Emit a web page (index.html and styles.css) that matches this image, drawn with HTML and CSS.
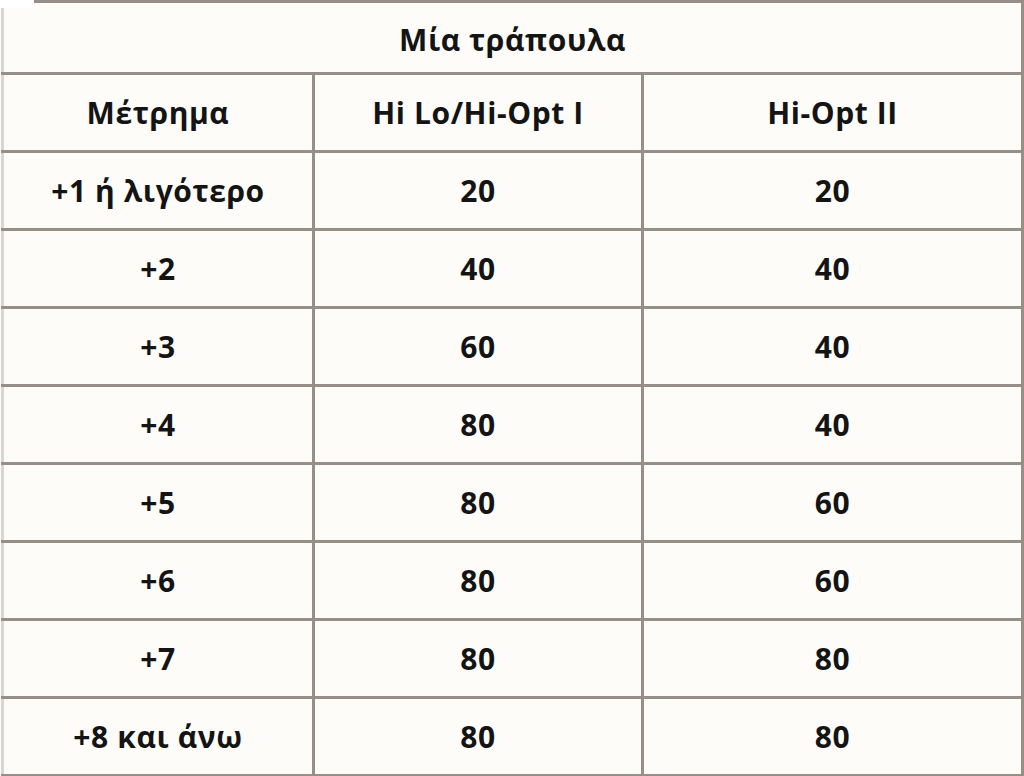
FILE: index.html
```html
<!DOCTYPE html>
<html lang="el">
<head>
<meta charset="utf-8">
<title>Μία τράπουλα</title>
<link rel="stylesheet" href="styles.css">
</head>
<body>
<div class="sheet">
<span class="notch"></span>
<table class="deck">
  <colgroup>
    <col class="c1"><col class="c2"><col class="c3">
  </colgroup>
  <tr class="title-row"><th colspan="3">Μία τράπουλα</th></tr>
  <tr><th>Μέτρημα</th><th>Hi Lo/Hi-Opt I</th><th>Hi-Opt II</th></tr>
  <tr><td>+1 ή λιγότερο</td><td>20</td><td>20</td></tr>
  <tr><td>+2</td><td>40</td><td>40</td></tr>
  <tr><td>+3</td><td>60</td><td>40</td></tr>
  <tr><td>+4</td><td>80</td><td>40</td></tr>
  <tr><td>+5</td><td>80</td><td>60</td></tr>
  <tr><td>+6</td><td>80</td><td>60</td></tr>
  <tr><td>+7</td><td>80</td><td>80</td></tr>
  <tr><td>+8 και άνω</td><td>80</td><td>80</td></tr>
</table>
</div>
</body>
</html>
```
FILE: styles.css
```css
html, body {
  margin: 0;
  padding: 0;
  background: #fdfcf9;
}
body {
  width: 1024px;
  height: 776px;
  overflow: hidden;
  font-family: "Open Sans", "DejaVu Sans", sans-serif;
  color: #141414;
}
.sheet {
  position: relative;
}
.notch {
  position: absolute;
  left: 0;
  top: 0;
  width: 34px;
  height: 8px;
  background: #ffffff;
}
.deck {
  margin-left: 1px;
  border-collapse: collapse;
  table-layout: fixed;
  width: 1020px;
}
.c1 { width: 311px; }
.c2 { width: 329px; }
.c3 { width: 380px; }
.deck th, .deck td {
  border: 3px solid #978e88;
  height: 75px;
  padding: 0;
  text-align: center;
  vertical-align: middle;
  font-size: 30px;
  letter-spacing: 0.6px;
  font-weight: 700;
  line-height: 1;
}
.deck tr:first-child th {
  height: 72px;
  padding-top: 5px;
  box-sizing: border-box;
}
.deck tr td:first-child, .deck tr th:first-child {
  border-left-color: #d8d5d2;
}
```
